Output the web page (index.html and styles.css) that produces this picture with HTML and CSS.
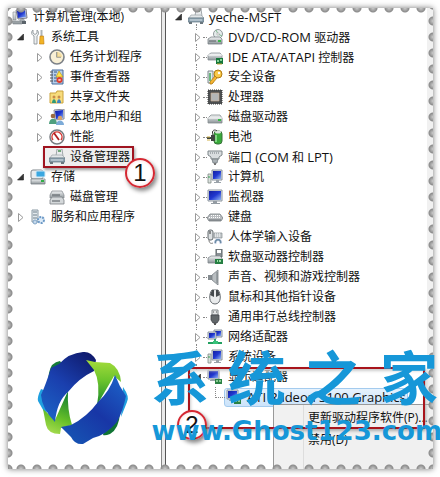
FILE: index.html
```html
<!DOCTYPE html>
<html lang="zh-CN">
<head>
<meta charset="utf-8">
<title>计算机管理</title>
<link rel="stylesheet" href="styles.css">
</head>
<body>
<svg class="defs" aria-hidden="true">
  <defs>
    <linearGradient id="scr" x1="0" y1="0" x2="1" y2="1"><stop offset="0" stop-color="#1420a0"/><stop offset=".5" stop-color="#2038d0"/><stop offset="1" stop-color="#8fb4f4"/></linearGradient>
    <linearGradient id="metal" x1="0" y1="0" x2="0" y2="1"><stop offset="0" stop-color="#f2f4f5"/><stop offset="1" stop-color="#8d9599"/></linearGradient>
    <linearGradient id="navy" x1=".8" y1="0" x2=".2" y2="1"><stop offset="0" stop-color="#101c70"/><stop offset=".5" stop-color="#1a3fae"/><stop offset="1" stop-color="#1c62c4"/></linearGradient>
    <linearGradient id="blue" x1=".9" y1="0" x2=".1" y2="1"><stop offset="0" stop-color="#1c62c8"/><stop offset=".5" stop-color="#1836a6"/><stop offset="1" stop-color="#1656b4"/></linearGradient>
    <linearGradient id="lime" x1="0" y1="0" x2="0" y2="1"><stop offset="0" stop-color="#a4dc3c"/><stop offset=".45" stop-color="#6cc42c"/><stop offset="1" stop-color="#18882c"/></linearGradient>
    <linearGradient id="lime2" x1=".6" y1="0" x2=".3" y2="1"><stop offset="0" stop-color="#128030"/><stop offset=".6" stop-color="#68c028"/><stop offset="1" stop-color="#a8dc50"/></linearGradient>
  </defs>
  <symbol id="shut" viewBox="0 0 12 20"><path d="M2.500 6.500v8l4.500-4z" fill="#fff" stroke="#9a9a9a"/></symbol>
  <symbol id="open" viewBox="0 0 12 20"><path d="M7.500 7v6h-6z" fill="#333" stroke="#222" stroke-width=".6"/></symbol>
  <symbol id="pc" viewBox="0 0 16 16"><path d="M4 1l10-1 1 9-9 1z" fill="#dde3e8" stroke="#778"/><path d="M5 2l8-1 1 7-8 1z" fill="url(#scr)"/><path d="M8 10h4l2 3H7z" fill="#a4abb0"/><path d="M1 3h3v8H1zM0 12h9l1 3H1z" fill="url(#metal)" stroke="#7d858a" stroke-width=".6"/><path d="M10 12h4v3h-4z" fill="#5b646b"/></symbol>
  <symbol id="tools" viewBox="0 0 16 16"><path d="M3 1v3l2 1.500 2-1.500V1c2 1.500 2 4.500 0 6v8H4V7C1 5.500 1 2.500 3 1z" fill="#eef0f1" stroke="#838b90" stroke-width=".8"/><path d="M10.500 1h2v6h-2z" fill="#aeb5b8"/><path d="M10 7h3.500l.5 8H9.500z" fill="#f2b425" stroke="#bd7810" stroke-width=".6"/></symbol>
  <symbol id="clock" viewBox="0 0 16 16"><circle cx="8" cy="8" r="7" fill="#f8efd5" stroke="#7d8288" stroke-width="1.600"/><path d="M8 3v5h4" fill="none" stroke="#686c70" stroke-width="1.200"/><path d="M8 8V3a5 5 0 0 1 5 5z" fill="#f4d78a" opacity=".7"/></symbol>
  <symbol id="event" viewBox="0 0 16 16"><path d="M3 1h11v14H3z" fill="#b8cfe9" stroke="#466a9b"/><path d="M1 3h3M1 6h3M1 9h3M1 12h3" stroke="#555"/><path d="M5 3h3M5 6h2M5 9h3M5 12h3" stroke="#35598c"/><path d="M10 2l4 6H7z" fill="#ffe24b" stroke="#b68f0b" stroke-width=".6"/><circle cx="10.500" cy="11" r="3" fill="#df3d2c"/><path d="M9.500 10l2 2m0-2l-2 2" stroke="#fff" stroke-width=".8"/></symbol>
  <symbol id="share" viewBox="0 0 16 16"><path d="M1 4h6l1-2h6v12H1z" fill="#f7dc7c" stroke="#caa23c"/><circle cx="5" cy="8" r="1.500" fill="#c88b4a"/><path d="M3 14c0-5 4-5 4 0z" fill="#2f9a77"/><circle cx="10" cy="8" r="1.500" fill="#c88b4a"/><path d="M8 14c0-5 4-5 4 0z" fill="#3d83c6"/></symbol>
  <symbol id="users" viewBox="0 0 16 16"><path d="M5 1l10-1v10l-9 1z" fill="#d7dde3" stroke="#889"/><path d="M6 2l8-1v8l-7 1z" fill="url(#scr)"/><circle cx="4" cy="7" r="2.300" fill="#9b6a3f"/><path d="M0 15c0-7 8-7 8 0z" fill="#4fa07f"/><circle cx="11" cy="9" r="2.200" fill="#d8a36b"/><path d="M7 16c0-6 8-6 8 0z" fill="#7dabd8"/></symbol>
  <symbol id="perf" viewBox="0 0 16 16"><circle cx="8" cy="8" r="7" fill="#fff" stroke="#767b80" stroke-width="1.500"/><path d="M4 11a5 5 0 1 1 8 0" fill="none" stroke="#d63b36" stroke-width="1.500"/><path d="M5 4l5 7" stroke="#b02020" stroke-width="1.800"/></symbol>
  <symbol id="device" viewBox="0 0 16 16"><path d="M8 0h5l1 7H7z" fill="#e8ebed" stroke="#8d9499" stroke-width=".8"/><path d="M9 1h3v2H9z" fill="#6fa878"/><path d="M1 9l2-3h10l3 3z" fill="#e3e7e9" stroke="#9ba3a8" stroke-width=".7"/><path d="M0 9h16v4H0z" fill="#8fa3b0" stroke="#607684" stroke-width=".7"/><path d="M2 11h12" stroke="#d3dee5"/><path d="M1 13h3v2H1zM12 13h3v2h-3z" fill="#6a767e"/></symbol>
  <symbol id="store" viewBox="0 0 16 16"><rect x="1" y="1" width="12" height="9" rx="2" fill="#e9ecee" stroke="#7f878c"/><rect x="6" y="2" width="9" height="6" rx="1" fill="#3aa7e0" stroke="#d0e9f7"/><path d="M1 10h14v5H1z" fill="url(#metal)" stroke="#798085" stroke-width=".8"/><path d="M11 11h3v2h-3z" fill="#2faf45"/></symbol>
  <symbol id="disks" viewBox="0 0 16 16"><path d="M3 2h10l2 4v3H1V6z" fill="url(#metal)" stroke="#8a9196" stroke-width=".8"/><path d="M3 8h10l2 3v4H1v-4z" fill="#d4d8da" stroke="#7b8287" stroke-width=".8"/><path d="M3 12h8M3 6h8" stroke="#50575c" stroke-width="1.200"/></symbol>
  <symbol id="service" viewBox="0 0 16 16"><path d="M2 1h6v12H2z" fill="#e3e9ed" stroke="#8b9aa5"/><path d="M3 3h4M3 6h4M3 9h4" stroke="#71818d"/><circle cx="11" cy="11" r="3" fill="#dceaf7" stroke="#6d9ac7" stroke-width="2" stroke-dasharray="2 1"/><circle cx="5" cy="13" r="2" fill="#c4d8eb" stroke="#82a6c7"/></symbol>
  <symbol id="dvd" viewBox="0 0 16 16"><circle cx="11" cy="5" r="4.500" fill="#e5ecec" stroke="#91999c"/><path d="M11 5L9 1m2 4l4 2" stroke="#7db98c"/><circle cx="11" cy="5" r="1.200" fill="#fff" stroke="#999" stroke-width=".6"/><path d="M1 10l3-2h9l2 2v5H1z" fill="url(#metal)" stroke="#788185" stroke-width=".8"/><path d="M2 12h7" stroke="#555d60"/><path d="M11 11h3v2h-3z" fill="#39b54a"/></symbol>
  <symbol id="ide" viewBox="0 0 16 16"><path d="M1 6l3-2h9l2 2v5H1z" fill="url(#metal)" stroke="#899195" stroke-width=".8"/><path d="M1 6h14" stroke="#fff"/><path d="M9 9h7v6H9z" fill="#16783c"/><path d="M10 11h2v2h-2zM13 10h2v2h-2z" fill="#8ad29a"/><path d="M10 15h5" stroke="#c7a536"/></symbol>
  <symbol id="lock" viewBox="0 0 16 16"><path d="M1 2h5v12H1z" fill="#e3e8eb" stroke="#7f898f"/><path d="M3 4v8" stroke="#43a95a" stroke-width="1.500"/><circle cx="11" cy="5" r="4" fill="#f9ca48" stroke="#b27a12"/><circle cx="12" cy="4" r="1.200" fill="#fff"/><path d="M8 7l2 2-5 6H3v-2z" fill="#f5b632" stroke="#b27a12" stroke-width=".8"/></symbol>
  <symbol id="cpu" viewBox="0 0 16 16"><path d="M1 1h14v14H1z" fill="#55585a" stroke="#333" stroke-dasharray="1 1"/><path d="M2 2h12v12H2z" fill="#4c4f51"/><path d="M4 4h8v8H4z" fill="#b2b5b7" stroke="#d0b090" stroke-width=".6"/></symbol>
  <symbol id="disk" viewBox="0 0 16 16"><path d="M1 9l3-3h9l2 3v5H1z" fill="url(#metal)" stroke="#858e91" stroke-width=".8"/><path d="M1 9h14" stroke="#fff"/><path d="M11 10h3v2h-3z" fill="#35bb45"/></symbol>
  <symbol id="battery" viewBox="0 0 16 16"><rect x="7" y="2" width="8" height="13" rx="3" fill="#38aa3b" stroke="#39733b"/><ellipse cx="11" cy="3" rx="3" ry="1.500" fill="#dce3dc"/><path d="M9 6v7" stroke="#9be59c" stroke-width="1.500"/><path d="M0 8h4V6h4v6H4v-2H0z" fill="#3f4540"/><path d="M0 8h3M0 11h3" stroke="#d2b148" stroke-width="1.200"/><path d="M6 6c-2-5 2-6 4-4" fill="none" stroke="#333"/></symbol>
  <symbol id="port" viewBox="0 0 16 16"><path d="M1 2h14v4l-3 2v2H4V8L1 6z" fill="#d9dddf" stroke="#7d8589"/><path d="M3 4h10" stroke="#737b80" stroke-dasharray="1 1"/><path d="M5 10h6l-1 4H6z" fill="#aab1b5" stroke="#747c81" stroke-width=".8"/><path d="M8 14v2" stroke="#777" stroke-width="2"/></symbol>
  <symbol id="comp" viewBox="0 0 16 16"><path d="M1 5h3v9H1z" fill="#d9e0dc" stroke="#808a85" stroke-width=".8"/><path d="M5 1h10v10H5z" fill="#dce2e8" stroke="#89929c"/><path d="M6 2h8v8H6z" fill="url(#scr)"/><path d="M9 11h3v2h2v1H7v-1h2z" fill="#9ba3aa"/><path d="M2 7v2" stroke="#30a050"/></symbol>
  <symbol id="monitor" viewBox="0 0 16 16"><path d="M1 1h14v11H1z" fill="#e2e6ea" stroke="#8d969f"/><path d="M2 2h12v9H2z" fill="url(#scr)"/><path d="M6 12h4v2h3v1H4v-1h2z" fill="#949ca3"/></symbol>
  <symbol id="keys" viewBox="0 0 16 16"><path d="M3 5h10l3 4-2 3H2L0 9z" fill="#b8bcbf" stroke="#777e82" stroke-width=".8"/><path d="M4 6.500h9M2 8.500h12" stroke="#fff" stroke-dasharray="1 1"/><path d="M2 11h12" stroke="#686e72"/></symbol>
  <symbol id="hid" viewBox="0 0 16 16"><rect x="1" y="1" width="5" height="10" rx="2" fill="#dde1e3" stroke="#62696d"/><path d="M3 2v3" stroke="#333"/><path d="M7 4h8v5H7z" fill="#c6cbce" stroke="#858c90" stroke-width=".7"/><path d="M8 5h6M8 7h6" stroke="#fff" stroke-dasharray="1 1"/><path d="M7 14c0-6 8-6 8 0l-2 1-1-3h-2l-1 3z" fill="#6c8ca5" stroke="#eef" stroke-width=".6"/><path d="M2 11c0 3 2 4 4 3" fill="none" stroke="#777"/></symbol>
  <symbol id="floppy" viewBox="0 0 16 16"><path d="M9 0h6v8H9z" fill="#8a9195" stroke="#5d6468"/><path d="M10 1h4v3h-4z" fill="#fff"/><path d="M1 9l3-2h9l2 2v5H1z" fill="url(#metal)" stroke="#7e878b" stroke-width=".8"/><path d="M8 10h8v5H8z" fill="#267f43"/><path d="M10 12h1m1 0h2" stroke="#9ee0a6" stroke-width="2"/></symbol>
  <symbol id="sound" viewBox="0 0 16 16"><path d="M1 6h4v5H1z" fill="#858c90"/><path d="M5 6l6-5v15l-6-5z" fill="#b9bec1" stroke="#7b8286" stroke-width=".8"/><path d="M10 3v11" stroke="#798084"/></symbol>
  <symbol id="mouse" viewBox="0 0 16 16"><path d="M5 1C2 4 1 15 8 15S14 4 11 1z" fill="#e9ebec" stroke="#666c70"/><path d="M5 1L3 6l4 2V1zM11 1l2 5-4 2V1z" fill="#454a4d"/><path d="M8 1v6" stroke="#e7e9ea" stroke-width="1.500"/></symbol>
  <symbol id="usb" viewBox="0 0 16 16"><path d="M5 1h6v5H5z" fill="#e2e4e5" stroke="#848a8d"/><path d="M6 3h1m2 0h1" stroke="#555"/><path d="M4 6h8v5l-2 3H6l-2-3z" fill="#62676a" stroke="#44484b" stroke-width=".8"/><path d="M8 14v2" stroke="#555" stroke-width="2"/></symbol>
  <symbol id="net" viewBox="0 0 16 16"><path d="M7 1h8v7H7z" fill="#dce3ea" stroke="#8b95a0"/><path d="M8 2h6v5H8z" fill="url(#scr)"/><path d="M1 3h8v7H1z" fill="#dce3ea" stroke="#8b95a0"/><path d="M2 4h6v5H2z" fill="url(#scr)"/><path d="M8 10v3M1 14h14" stroke="#22a060" stroke-width="1.800"/><path d="M6 12h5v3H6z" fill="#37c279"/></symbol>
  <symbol id="card" viewBox="0 0 16 16"><path d="M1 1h11v9H1z" fill="#dde3ea" stroke="#8b95a0"/><path d="M2 2h9v7H2z" fill="url(#scr)"/><path d="M5 10h4v2H3v-1z" fill="#9ba3aa"/><path d="M8 10h7v5H8z" fill="#2b8244"/><path d="M9 12h2m1 0h2" stroke="#a5dfab" stroke-width="1.500"/></symbol>
</svg>

<main class="stamp">
  <nav class="pane left">
    <ul class="tree">
      <li class="row root"><svg class="ico"><use href="#pc"/></svg>计算机管理(本地)</li>
      <li class="row l1"><button class="tw" aria-label="折叠"><svg><use href="#open"/></svg></button><svg class="ico"><use href="#tools"/></svg>系统工具</li>
      <li class="row l2"><button class="tw" aria-label="展开"><svg><use href="#shut"/></svg></button><svg class="ico"><use href="#clock"/></svg>任务计划程序</li>
      <li class="row l2"><button class="tw" aria-label="展开"><svg><use href="#shut"/></svg></button><svg class="ico"><use href="#event"/></svg>事件查看器</li>
      <li class="row l2"><button class="tw" aria-label="展开"><svg><use href="#shut"/></svg></button><svg class="ico"><use href="#share"/></svg>共享文件夹</li>
      <li class="row l2"><button class="tw" aria-label="展开"><svg><use href="#shut"/></svg></button><svg class="ico"><use href="#users"/></svg>本地用户和组</li>
      <li class="row l2"><button class="tw" aria-label="展开"><svg><use href="#shut"/></svg></button><svg class="ico"><use href="#perf"/></svg>性能</li>
      <li class="row l2 leaf"><span class="current"><svg class="ico"><use href="#device"/></svg>设备管理器</span><span class="step one">1</span></li>
      <li class="row l1"><button class="tw" aria-label="折叠"><svg><use href="#open"/></svg></button><svg class="ico"><use href="#store"/></svg>存储</li>
      <li class="row l2 leaf"><svg class="ico"><use href="#disks"/></svg>磁盘管理</li>
      <li class="row l1"><button class="tw" aria-label="展开"><svg><use href="#shut"/></svg></button><svg class="ico"><use href="#service"/></svg>服务和应用程序</li>
    </ul>
  </nav>
  <div class="splitter"></div>
  <section class="pane right">
    <ul class="tree">
      <li class="row l1"><button class="tw" aria-label="折叠"><svg><use href="#open"/></svg></button><svg class="ico"><use href="#device"/></svg><span class="en">yeche-MSFT</span></li>
      <li class="row l2"><button class="tw" aria-label="展开"><svg><use href="#shut"/></svg></button><svg class="ico"><use href="#dvd"/></svg><span><span class="en">DVD/CD-ROM</span> 驱动器</span></li>
      <li class="row l2"><button class="tw" aria-label="展开"><svg><use href="#shut"/></svg></button><svg class="ico"><use href="#ide"/></svg><span><span class="en">IDE ATA/ATAPI</span> 控制器</span></li>
      <li class="row l2"><button class="tw" aria-label="展开"><svg><use href="#shut"/></svg></button><svg class="ico"><use href="#lock"/></svg>安全设备</li>
      <li class="row l2"><button class="tw" aria-label="展开"><svg><use href="#shut"/></svg></button><svg class="ico"><use href="#cpu"/></svg>处理器</li>
      <li class="row l2"><button class="tw" aria-label="展开"><svg><use href="#shut"/></svg></button><svg class="ico"><use href="#disk"/></svg>磁盘驱动器</li>
      <li class="row l2"><button class="tw" aria-label="展开"><svg><use href="#shut"/></svg></button><svg class="ico"><use href="#battery"/></svg>电池</li>
      <li class="row l2"><button class="tw" aria-label="展开"><svg><use href="#shut"/></svg></button><svg class="ico"><use href="#port"/></svg><span>端口 <span class="en">(COM</span> 和 <span class="en">LPT)</span></span></li>
      <li class="row l2"><button class="tw" aria-label="展开"><svg><use href="#shut"/></svg></button><svg class="ico"><use href="#comp"/></svg>计算机</li>
      <li class="row l2"><button class="tw" aria-label="展开"><svg><use href="#shut"/></svg></button><svg class="ico"><use href="#monitor"/></svg>监视器</li>
      <li class="row l2"><button class="tw" aria-label="展开"><svg><use href="#shut"/></svg></button><svg class="ico"><use href="#keys"/></svg>键盘</li>
      <li class="row l2"><button class="tw" aria-label="展开"><svg><use href="#shut"/></svg></button><svg class="ico"><use href="#hid"/></svg>人体学输入设备</li>
      <li class="row l2"><button class="tw" aria-label="展开"><svg><use href="#shut"/></svg></button><svg class="ico"><use href="#floppy"/></svg>软盘驱动器控制器</li>
      <li class="row l2"><button class="tw" aria-label="展开"><svg><use href="#shut"/></svg></button><svg class="ico"><use href="#sound"/></svg>声音、视频和游戏控制器</li>
      <li class="row l2"><button class="tw" aria-label="展开"><svg><use href="#shut"/></svg></button><svg class="ico"><use href="#mouse"/></svg>鼠标和其他指针设备</li>
      <li class="row l2"><button class="tw" aria-label="展开"><svg><use href="#shut"/></svg></button><svg class="ico"><use href="#usb"/></svg>通用串行总线控制器</li>
      <li class="row l2"><button class="tw" aria-label="展开"><svg><use href="#shut"/></svg></button><svg class="ico"><use href="#net"/></svg>网络适配器</li>
      <li class="row l2"><button class="tw" aria-label="展开"><svg><use href="#shut"/></svg></button><svg class="ico"><use href="#comp"/></svg>系统设备</li>
      <li class="row l2"><button class="tw" aria-label="折叠"><svg><use href="#open"/></svg></button><svg class="ico"><use href="#card"/></svg>显示适配器</li>
      <li class="row l3"><span class="selected"><svg class="ico"><use href="#card"/></svg><span class="en">ATI Radeon 3100 Graphics</span></span></li>
    </ul>
    <div class="menu">
      <button>更新驱动程序软件(P)...</button>
      <button>禁用(D)</button>
    </div>
    <div class="frame"></div>
    <span class="step two">2</span>
  </section>
  <div class="edge"></div>
  <svg class="logo" viewBox="0 0 93 95" aria-hidden="true">
    <path d="M4 38Q0 46 1 50L9 64L14 42z" fill="#20a0e0"/>
    <path d="M86 36Q93 46 90 51L84 66z" fill="#20a0e0"/>
    <path d="M23 10Q14 11 12 22L10 36L30 20z" fill="#147c38"/>
    <path d="M83 62Q82 78 73 83Q68 85 66 84L70 66z" fill="#107434"/>
    <path d="M31 40Q30 58 35 74L24 77L23 83Q11 83 9 74L6 58L18 69z" fill="url(#lime2)"/>
    <path d="M59 9Q54 0 46 1Q32 2 22 13L14 17Q9 33 4 44Q5 58 18 71Q20 50 31 41Q42 27 57 20z" fill="url(#navy)"/>
    <path d="M49 9L58 11L73 12Q83 17 84 31L77 25L60 54Q64 32 57 19z" fill="url(#lime)"/>
    <path d="M78 24Q82 35 89 45Q86 60 80 71Q69 84 56 87L46 93Q38 94 34 86L24 76L34 74Q50 66 61 51Q73 40 78 24z" fill="url(#blue)"/>
  </svg>
  <div class="mark">
    <div class="brand"><span>系</span><span>统</span><span>之</span><span>家</span></div>
    <div class="site">www.Ghost123.com</div>
  </div>
</main>
</body>
</html>
```

FILE: styles.css
```css
* { box-sizing: border-box; }
body {
  margin: 0;
  padding: 8px 7px 8px 8px;
  background: #fff;
  color: #111;
  font: 12px/20px "Open Sans", "Noto Sans CJK SC", sans-serif;
  overflow: hidden;
}
.defs { position: absolute; width: 0; height: 0; }
.stamp {
  position: relative;
  display: flex;
  min-height: calc(100vh - 16px);
  background: #fff;
  box-shadow: 0 0 6px #777;
}
.pane { position: relative; }
.left { flex: 0 0 36%; }
.right { flex: 1; border-right: 6px solid #f1f1f1; }
.splitter {
  flex: 0 0 5px;
  background: #e9e9e9;
  border-left: 1px solid #888;
  border-right: 1px solid #555;
}
.tree { list-style: none; margin: -1px 0 0; padding: 0; }
.row { position: relative; display: flex; align-items: center; height: 20px; white-space: nowrap; }
.en { font-size: 13px; }
.root { padding-left: 4px; }
.l1 { padding-left: 8px; }
.l2 { padding-left: 27px; }
.l2.leaf { padding-left: 41px; }
.l3 { padding-left: 58px; }
.ico { flex: none; width: 16px; height: 16px; margin-right: 5px; }
.tw { width: 12px; height: 20px; margin: 0 2px 0 0; padding: 0; border: 0; background: none; }
.tw svg { display: block; width: 12px; height: 20px; }

/* connector dots of the device tree */
.right .l2::before {
  content: "";
  position: absolute;
  left: 30px;
  top: -3px;
  height: 6px;
  border-left: 1px dotted #888;
}
.right .l2::after {
  content: "";
  position: absolute;
  left: 37px;
  top: 10px;
  width: 4px;
  border-top: 1px dotted #888;
}
.l3::before {
  content: "";
  position: absolute;
  left: 49px;
  top: 0;
  width: 9px;
  height: 10px;
  border: dotted #888;
  border-width: 0 0 1px 1px;
}
.current {
  display: flex;
  align-items: center;
  height: 22px;
  margin-left: -6px;
  padding-left: 4px;
  padding-right: 2px;
  border: 2px solid #a01420;
  background: #eee;
  box-shadow: 1px 2px 3px #999;
}
.selected {
  display: flex;
  align-items: center;
  height: 19px;
  padding: 0 1px;
  border: 1px solid #a4cbee;
  border-radius: 3px;
  background: linear-gradient(#e6f2fd, #cbe3fa);
}
.step {
  position: absolute;
  z-index: 2;
  width: 30px;
  height: 30px;
  border: 2px solid #d42832;
  border-radius: 50%;
  background: radial-gradient(circle, #fff 55%, #f6c4c6);
  box-shadow: 2px 3px 4px #888;
  font: 24px/26px "Liberation Sans", sans-serif;
  text-align: center;
}
.one { left: 117px; top: 11px; }
.two { left: 11px; top: 402px; }
.frame {
  position: absolute;
  left: 22px;
  right: 2px;
  top: 359px;
  height: 62px;
  border: 2px solid #a8141c;
  box-shadow: 1px 2px 3px #aaa, inset 1px 2px 3px #ccc;
}
.menu {
  position: absolute;
  left: 107px;
  right: -6px;
  top: 396px;
  bottom: 0;
  padding-top: 2px;
  border: solid #999;
  border-width: 1px 0 0 1px;
  background: linear-gradient(90deg, #f1f1f1 29px, #ddd 29px, #ddd 30px, #f0f0f0 30px);
}
.menu button {
  display: block;
  width: 100%;
  height: 22px;
  padding: 0 0 0 34px;
  border: 0;
  background: none;
  color: #111;
  font: inherit;
  text-align: left;
  white-space: nowrap;
}

/* perforated border */
.edge {
  position: absolute;
  inset: 0;
  background:
    radial-gradient(circle at 8px 0, #ccc 0, #8c8c8c 4px, transparent 5px) 5px 0 / 16px 6px repeat-x,
    radial-gradient(circle at 8px 6px, #ccc 0, #8c8c8c 4px, transparent 5px) 5px 100% / 16px 6px repeat-x,
    radial-gradient(circle at 0 8px, #ccc 0, #8c8c8c 4px, transparent 5px) 0 5px / 6px 16px repeat-y,
    radial-gradient(circle at 6px 8px, #ccc 0, #8c8c8c 4px, transparent 5px) 100% 5px / 6px 16px repeat-y;
  pointer-events: none;
}
.logo { position: absolute; left: 29px; bottom: 23px; width: 93px; height: 95px; }
.mark {
  position: absolute;
  z-index: 3;
  right: -9px;
  bottom: 22px;
  color: #1697d8;
  text-align: right;
  pointer-events: none;
}
.brand {
  display: flex;
  justify-content: space-between;
  margin-bottom: 8px;
  padding-right: 4px;
  font: 700 58px/64px "Noto Sans CJK SC", sans-serif;
}
.site { font: bold 26px/32px "DejaVu Sans", sans-serif; }
```
